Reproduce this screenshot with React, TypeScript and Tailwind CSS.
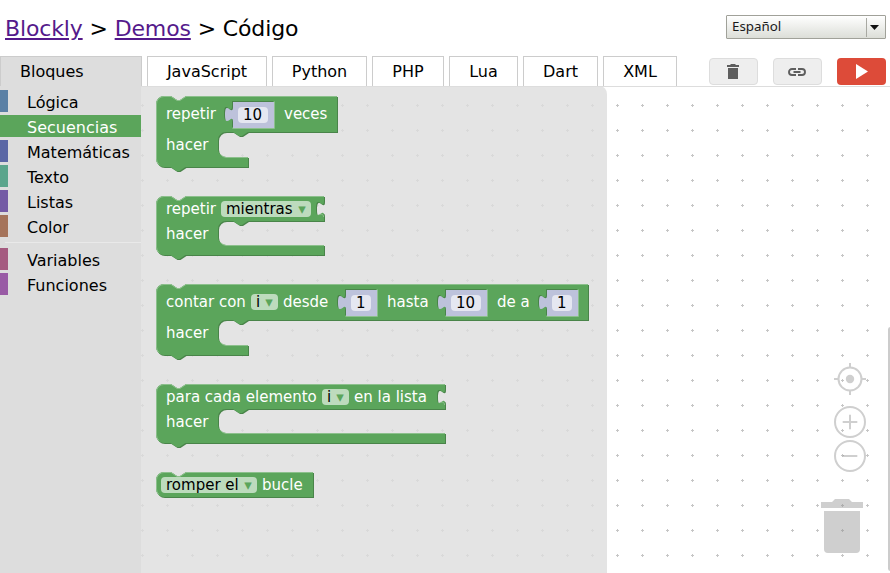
import type { ReactNode } from "react";

const GREEN = "#5ba55b";
const DARK = "#498449";
const LIGHT = "#8cc08c";
const SHADOW = "#bdc2db";

const tabs = [
  { label: "JavaScript", width: "w-[120px]" },
  { label: "Python", width: "w-[95px]" },
  { label: "PHP", width: "w-[72px]" },
  { label: "Lua", width: "w-[69px]" },
  { label: "Dart", width: "w-[75px]" },
  { label: "XML", width: "w-[74px]" },
];

const categories = [
  { label: "Lógica", bar: "border-[#5b80a5]" },
  { label: "Secuencias", bar: "border-[#5ba55b]", selected: true },
  { label: "Matemáticas", bar: "border-[#5b67a5]" },
  { label: "Texto", bar: "border-[#5ba58c]" },
  { label: "Listas", bar: "border-[#745ba5]" },
  { label: "Color", bar: "border-[#a5745b]" },
];

const procedures = [
  { label: "Variables", bar: "border-[#a55b80]" },
  { label: "Funciones", bar: "border-[#995ba5]" },
];

function Category({ label, bar, selected }: { label: string; bar: string; selected?: boolean }) {
  return (
    <li
      className={`mb-[3px] h-[22px] border-l-8 pl-[19px] pt-[2px] text-base leading-[22px] ${bar} ${
        selected ? "bg-[#5ba55b] text-white" : "text-black"
      }`}
    >
      {label}
    </li>
  );
}

function Label({ x, y, dark, children }: { x: number; y: number; dark?: boolean; children: ReactNode }) {
  return (
    <text x={x} y={y} fontSize="15" fill={dark ? "#000" : "#fff"}>
      {children}
    </text>
  );
}

// Outline of a block; coordinates are relative to its top left corner.
function Shape({ d, light }: { d: string; light: string }) {
  return (
    <>
      <path d={d} fill={DARK} transform="translate(1,1)" />
      <path d={d} fill={GREEN} />
      <path d={light} fill="none" stroke={LIGHT} strokeLinecap="round" />
    </>
  );
}

const START = "M0,8 A8,8 0 0,1 8,0 H15 l6,4 3,0 6,-4";
const NEXT = "H29.5 l-6,4 -3,0 -6,-4 H8 a8,8 0 0,1 -8,-8 z";

interface LoopProps {
  width: number;
  row: number;
  mouth: number;
  foot: number;
  socket?: boolean;
}

function Loop({ width, row, mouth, foot, socket }: LoopProps) {
  const bottom = row + mouth + 10;
  const side = socket ? `v5 c0,10 -8,-8 -8,7.5 s8,-2.5 8,7.5 V${row}` : `V${row}`;
  const d = `${START} H${width} ${side} H92 l-6,4 -3,0 -6,-4 h-7 a8,8 0 0,0 -8,8 v${mouth - 16} a8,8 0 0,0 8,8 H${foot} V${bottom} ${NEXT}`;
  let light = `M2.7,${bottom - 2.7} A7.5,7.5 0 0,1 0.5,${bottom - 8} V8 A7.5,7.5 0 0,1 8,0.5 H15 l6,4 3,0 6,-4 H${width - 0.5}`;
  light += ` M64.7,${row + mouth - 2.2} A8.5,8.5 0 0,0 70,${row + mouth + 0.5} H${foot - 0.5}`;
  if (socket) light += ` M${width - 5},18.6 c2.6,-0.8 4.4,-0.6 4.5,2`;
  return <Shape d={d} light={light} />;
}

function NumberBlock({ x, value, width }: { x: number; value: string; width: number }) {
  const d = `M0,0 H${width} V26 H0 V20 c0,-10 -8,8 -8,-7.5 s8,2.5 8,-7.5 z`;
  return (
    <g transform={`translate(${x},6)`}>
      <path d={d} fill={DARK} transform="translate(-1,-1)" />
      <path d={`M${width + 0.5},-0.5 V26.5 H-0.5 M-6.3,17.5 l2,-0.8`} fill="none" stroke={LIGHT} />
      <path d={d} fill={SHADOW} />
      <rect x="5" y="5" width={width - 11} height="16" rx="4" fill="#fff" fillOpacity="0.6" />
      <Label x={10} y={18} dark>
        {value}
      </Label>
    </g>
  );
}

function Dropdown({ x, y, width, value }: { x: number; y: number; width: number; value: string }) {
  return (
    <g>
      <rect x={x} y={y} width={width} height="16" rx="4" fill="#fff" fillOpacity="0.6" />
      <Label x={x + 5} y={y + 13} dark>
        {value}
      </Label>
      <text x={x + width - 5.3} y={y + 13} fontSize="15" fill={GREEN} textAnchor="end">
        ▾
      </text>
    </g>
  );
}

function Canvas() {
  return (
    <svg className="block h-full w-full" viewBox="141 87 749 486" fontFamily="DejaVu Sans, sans-serif">
      <defs>
        <pattern id="grid" x="130" y="93" width="25" height="25" patternUnits="userSpaceOnUse">
          <path d="M11,12.5 h3 M12.5,11 v3" stroke="#c6c6c6" />
        </pattern>
      </defs>
      <rect x="141" y="87" width="749" height="486" fill="url(#grid)" />
      <path d="M141,86 H599 a8,8 0 0,1 8,8 V573 H141 z" fill="#ddd" fillOpacity="0.8" />

      <g transform="translate(156,96)">
        <Loop width={181} row={36} mouth={25} foot={92} />
        <Label x={10} y={23}>repetir</Label>
        <NumberBlock x={77} value="10" width={41} />
        <Label x={128} y={23}>veces</Label>
        <Label x={10} y={54}>hacer</Label>
      </g>

      <g transform="translate(156,196)">
        <Loop width={168} row={25} mouth={24} foot={168} socket />
        <Label x={10} y={18}>repetir</Label>
        <Dropdown x={65} y={5} width={90} value="mientras" />
        <Label x={10} y={43}>hacer</Label>
      </g>

      <g transform="translate(156,284)">
        <Loop width={432} row={36} mouth={25} foot={92} />
        <Label x={10} y={23}>contar con</Label>
        <Dropdown x={95} y={10} width={27} value="i" />
        <Label x={127} y={23}>desde</Label>
        <NumberBlock x={190} value="1" width={31} />
        <Label x={231} y={23}>hasta</Label>
        <NumberBlock x={290} value="10" width={41} />
        <Label x={341} y={23}>de a</Label>
        <NumberBlock x={391} value="1" width={31} />
        <Label x={10} y={54}>hacer</Label>
      </g>

      <g transform="translate(156,384)">
        <Loop width={289} row={25} mouth={24} foot={289} socket />
        <Label x={10} y={18}>para cada elemento</Label>
        <Dropdown x={166} y={5} width={27} value="i" />
        <Label x={198} y={18}>en la lista</Label>
        <Label x={10} y={43}>hacer</Label>
      </g>

      <g transform="translate(156,472)">
        <Shape
          d={`${START} H157 V25 H8 a8,8 0 0,1 -8,-8 z`}
          light="M2.7,22.3 A7.5,7.5 0 0,1 0.5,17 V8 A7.5,7.5 0 0,1 8,0.5 H15 l6,4 3,0 6,-4 H156.5"
        />
        <Dropdown x={5} y={5} width={96} value="romper el" />
        <Label x={106} y={18}>bucle</Label>
      </g>

      <g fill="none" stroke="#888" strokeWidth="2" opacity="0.4">
        <circle cx="850" cy="379" r="11.5" />
        <circle cx="850" cy="379" r="4.2" fill="#888" stroke="none" />
        <path d="M850,363 v4 M850,391 v4 M834,379 h4 M862,379 h4" />
        <circle cx="850" cy="422" r="15" />
        <path d="M842.7,422 h14.6 M850,414.7 v14.6" />
        <circle cx="850" cy="456" r="15" />
        <path d="M842.7,456 h14.6" />
      </g>
      <g fill="#888" opacity="0.4">
        <path d="M821,502 h11 l3,-3 h14 l3,3 h11 v6 h-42 z" />
        <path d="M824,511 h36 v38 a4,4 0 0,1 -4,4 h-28 a4,4 0 0,1 -4,-4 z" />
      </g>
      <rect x="888" y="327" width="6" height="244" rx="2.5" fill="#ccc" />
    </svg>
  );
}

export default function App() {
  return (
    <div className="flex h-[573px] w-[890px] flex-col overflow-hidden bg-white font-['DejaVu_Sans',sans-serif] text-black">
      <header className="flex h-14 shrink-0 items-start justify-between pl-[5px] pr-1">
        <h1 className="pt-4 text-[22px] leading-[26px] tracking-[-0.14px]">
          <a className="text-[#551a8b] underline">Blockly</a> &gt; <a className="text-[#551a8b] underline">Demos</a> &gt; Código
        </h1>
        <div className="mt-[15px] flex h-6 w-40 items-center rounded-[1px] border border-[#a0a199] bg-linear-to-b from-white to-[#dcded8] font-['Noto_Sans',sans-serif] text-[13.333px] text-[#1a1a1a]">
          <span className="flex-1 pb-[2px] pl-[5px] leading-5">Español</span>
          <span className="flex h-[19px] w-[19px] items-center border-l border-[#a8a9a2] pl-[3px]">
            <svg width="9" height="5" viewBox="0 0 9 5">
              <path d="M0,0 H9 L4.5,5 z" fill="#111" />
            </svg>
          </span>
        </div>
      </header>

      <nav className="flex h-[30px] shrink-0 pr-1">
        <div className="w-[142px] border border-b-0 border-[#ccc] bg-[#ddd] pl-[19px] text-base leading-[29px]">Bloques</div>
        <div className="ml-[5px] flex flex-1 gap-[5px]">
          {tabs.map((tab) => (
            <div key={tab.label} className={`${tab.width} border border-b-0 border-[#ccc] text-center text-base leading-[29px]`}>
              {tab.label}
            </div>
          ))}
        </div>
        <div className="mt-[2px] flex gap-[15px]">
          <button className="flex h-[27px] w-[49px] items-center justify-center rounded border border-[#ddd] bg-[#eee]">
            <svg className="mr-px" width="12" height="15" viewBox="0 0 12 15" fill="#5e5e5e">
              <path d="M0,1 H3 L4,0 H8 L9,1 H12 V3 H0 z M1,4 H11 V15 H1 z" />
            </svg>
          </button>
          <button className="flex h-[27px] w-[49px] items-center justify-center rounded border border-[#ddd] bg-[#eee]">
            <svg className="mr-px" width="18" height="8" viewBox="0 0 18 8" fill="none" stroke="#5e5e5e" strokeWidth="1.9">
              <path d="M8,1 H4 a3,3 0 0,0 0,6 H8 M10,1 h4 a3,3 0 0,1 0,6 H10 M5.5,4 h7" />
            </svg>
          </button>
          <button className="flex h-[27px] w-[49px] items-center justify-center rounded bg-[#dd4b39]">
            <svg className="ml-px" width="12" height="15" viewBox="0 0 12 15" fill="#fff">
              <path d="M0,0 L12,7.5 L0,15 z" />
            </svg>
          </button>
        </div>
      </nav>

      <main className="flex min-h-0 flex-1">
        <aside className="w-[141px] shrink-0 bg-[#ddd] pt-1">
          <ul>
            {categories.map((item) => (
              <Category key={item.label} {...item} />
            ))}
          </ul>
          <hr className="mb-[5px] ml-[5px] mt-[5px] border-t border-[#e9e9e9]" />
          <ul>
            {procedures.map((item) => (
              <Category key={item.label} {...item} />
            ))}
          </ul>
        </aside>
        <section className="min-w-0 flex-1 border-t border-[#ddd]">
          <Canvas />
        </section>
      </main>
    </div>
  );
}
